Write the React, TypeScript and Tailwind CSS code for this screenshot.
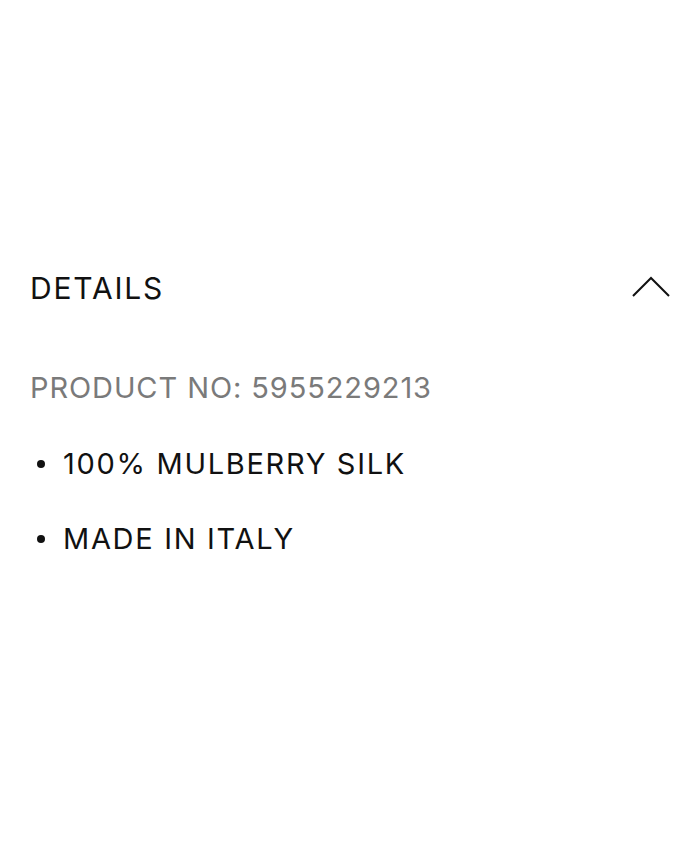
import React from 'react';

const items = ['100% MULBERRY SILK', 'MADE IN ITALY'];

export default function App() {
  return (
    <div className="h-[850px] w-[700px] bg-white font-['Inter',sans-serif] text-[#111111]">
      <div className="pl-[30px] pr-[31px] pt-[273px]">
        <button className="flex w-full items-center justify-between text-left">
          <span className="text-[30px] leading-[30px] tracking-[1.8px]">DETAILS</span>
          <svg width="40" height="24" viewBox="0 0 40 24" className="-mr-[2px]" fill="none">
            <path d="M2 20 L20 2 L38 20" stroke="#111111" strokeWidth="2" />
          </svg>
        </button>
        <div className="mt-[70px]">
          <p className="text-[29px] leading-[30px] tracking-[0.9px] text-[#7a7a7a]">PRODUCT NO: 5955229213</p>
          <ul className="mt-[46px] flex flex-col gap-[45px]">
            {items.map((it) => (
              <li key={it} className="flex items-center text-[29px] leading-[30px] tracking-[1.7px]">
                <span className="ml-[7px] mr-[18px] h-[8px] w-[8px] rounded-full bg-[#111111]" />
                {it}
              </li>
            ))}
          </ul>
        </div>
      </div>
    </div>
  );
}
